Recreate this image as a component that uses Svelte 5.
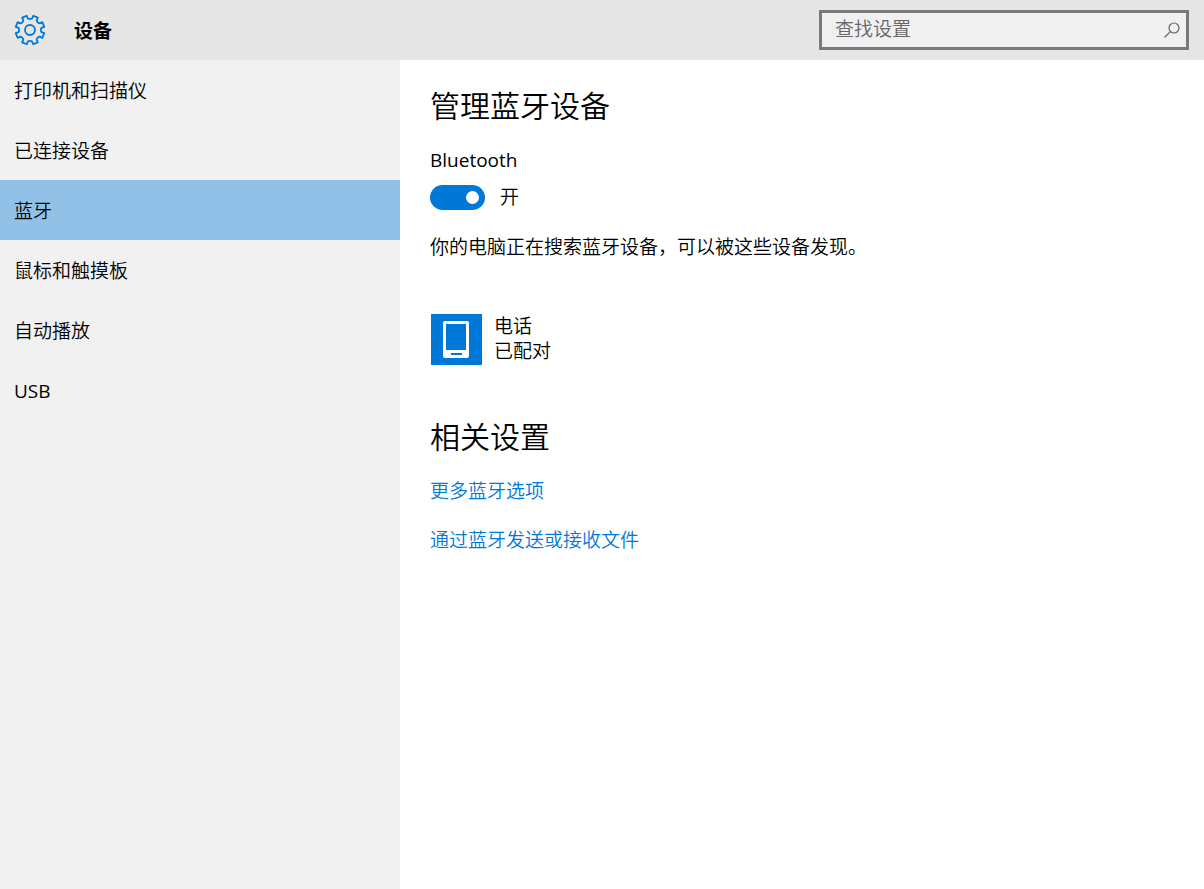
<script>
  const categories = [
    { name: '打印机和扫描仪' },
    { name: '已连接设备' },
    { name: '蓝牙' },
    { name: '鼠标和触摸板' },
    { name: '自动播放' },
    { name: 'USB', latin: true },
  ];
  const links = ['更多蓝牙选项', '通过蓝牙发送或接收文件'];

  let selected = $state('蓝牙');
  let bluetooth = $state(true);
  let query = $state('');

  // Outline of the eight-toothed gear, centred on 16,16.
  function gearOutline() {
    const points = [];
    const add = (radius, degrees) => {
      const a = (degrees * Math.PI) / 180;
      points.push(`${(16 + radius * Math.cos(a)).toFixed(2)},${(16 + radius * Math.sin(a)).toFixed(2)}`);
    };
    for (let i = 0; i < 8; i++) {
      const c = 22.5 + i * 45;
      add(11.1, c - 16);
      add(11.7, c - 12);
      add(14.6, c - 10);
      add(14.6, c + 10);
      add(11.7, c + 12);
      add(11.1, c + 16);
    }
    return points.join(' ');
  }
</script>

<div class="window">
  <header>
    <svg class="gear" viewBox="0 0 32 32" aria-hidden="true">
      <polygon points={gearOutline()} />
      <circle cx="16" cy="16" r="5" />
    </svg>
    <h1>设备</h1>
    <label class="search">
      <input type="text" placeholder="查找设置" aria-label="查找设置" bind:value={query} />
      <svg viewBox="0 0 18 18" aria-hidden="true">
        <circle cx="11" cy="7" r="5" />
        <path d="M7.4 10.6 1.5 16.5" />
      </svg>
    </label>
  </header>

  <div class="body">
    <nav>
      {#each categories as { name, latin }}
        <button class:active={selected === name} class:latin onclick={() => (selected = name)}>{name}</button>
      {/each}
    </nav>

    <main>
      <h2>管理蓝牙设备</h2>
      <label class="name latin" for="bluetooth">Bluetooth</label>
      <div class="toggle">
        <input id="bluetooth" type="checkbox" role="switch" bind:checked={bluetooth} />
        <span>{bluetooth ? '开' : '关'}</span>
      </div>
      <p class="status">你的电脑正在搜索蓝牙设备，可以被这些设备发现。</p>

      <button class="device">
        <svg viewBox="0 0 51 51" aria-hidden="true">
          <rect width="51" height="51" fill="#0078d7" />
          <path
            fill="#fff"
            fill-rule="evenodd"
            d="M14 7h22a2 2 0 0 1 2 2v33a2 2 0 0 1-2 2H14a2 2 0 0 1-2-2V9a2 2 0 0 1 2-2ZM15 10v26h20V10ZM20 39v2h11v-2Z"
          />
        </svg>
        <span class="details">
          <span>电话</span>
          <span>已配对</span>
        </span>
      </button>

      <h2>相关设置</h2>
      <ul>
        {#each links as link}
          <li><a href="#settings">{link}</a></li>
        {/each}
      </ul>
    </main>
  </div>
</div>

<style>
  :global(body) {
    margin: 0;
  }

  .window {
    display: flex;
    flex-direction: column;
    min-height: 100vh;
    background: #fff;
    color: #000;
    font: 350 19px/25px 'Open Sans', 'Noto Sans CJK SC', sans-serif;
  }

  button,
  input {
    margin: 0;
    padding: 0;
    border: 0;
    background: none;
    color: inherit;
    font: inherit;
  }

  .latin {
    font-weight: 400;
  }

  header {
    display: flex;
    align-items: center;
    height: 60px;
    padding: 0 15px 0 14px;
    background: #e6e6e6;
  }

  .gear {
    width: 32px;
    height: 32px;
    fill: none;
    stroke: #0078d7;
    stroke-width: 1.8;
    stroke-linejoin: round;
  }

  h1 {
    margin: 0 auto 0 28px;
    padding-top: 2px;
    font-size: 19px;
    font-weight: 700;
  }

  .search {
    box-sizing: border-box;
    display: flex;
    align-items: center;
    width: 370px;
    height: 40px;
    padding: 0 5px 0 13px;
    border: 3px solid #7a7a7a;
    background: #f0f0f0;
  }

  .search input {
    flex: 1;
    min-width: 0;
    padding-bottom: 2px;
    outline: none;
  }

  .search input::placeholder {
    color: #666;
    opacity: 1;
  }

  .search svg {
    width: 18px;
    height: 18px;
    fill: none;
    stroke: #666;
    stroke-width: 1.2;
  }

  .body {
    display: flex;
    flex: 1;
  }

  nav {
    display: flex;
    flex-direction: column;
    flex: 0 0 400px;
    background: #f1f1f1;
  }

  nav button {
    height: 60px;
    padding: 2px 14px 0;
    text-align: left;
  }

  nav button.active {
    background: #91c1e7;
  }

  main {
    flex: 1;
    padding: 26px 30px;
  }

  h2 {
    margin: 0;
    font-size: 30px;
    font-weight: 350;
    line-height: 40px;
  }

  .name {
    display: block;
    margin-top: 22px;
  }

  .toggle {
    display: flex;
    align-items: center;
    gap: 15px;
    margin-top: 12px;
  }

  .toggle input {
    appearance: none;
    display: flex;
    align-items: center;
    box-sizing: border-box;
    width: 55px;
    height: 25px;
    padding: 0 6px;
    border-radius: 13px;
    background: #999;
  }

  .toggle input::before {
    content: '';
    width: 13px;
    height: 13px;
    border-radius: 50%;
    background: #fff;
  }

  .toggle input:checked {
    justify-content: flex-end;
    background: #0078d7;
  }

  .status {
    margin: 25px 0 0;
  }

  .device {
    display: flex;
    align-items: center;
    gap: 12px;
    margin: 54px 0 52px 1px;
    text-align: left;
  }

  .device svg {
    width: 51px;
    height: 51px;
  }

  .details {
    padding-bottom: 1px;
  }

  .details span {
    display: block;
  }

  ul {
    display: grid;
    gap: 24px;
    margin: 22px 0 0;
    padding: 0;
    list-style: none;
  }

  a {
    color: #0078d7;
    text-decoration: none;
  }
</style>
